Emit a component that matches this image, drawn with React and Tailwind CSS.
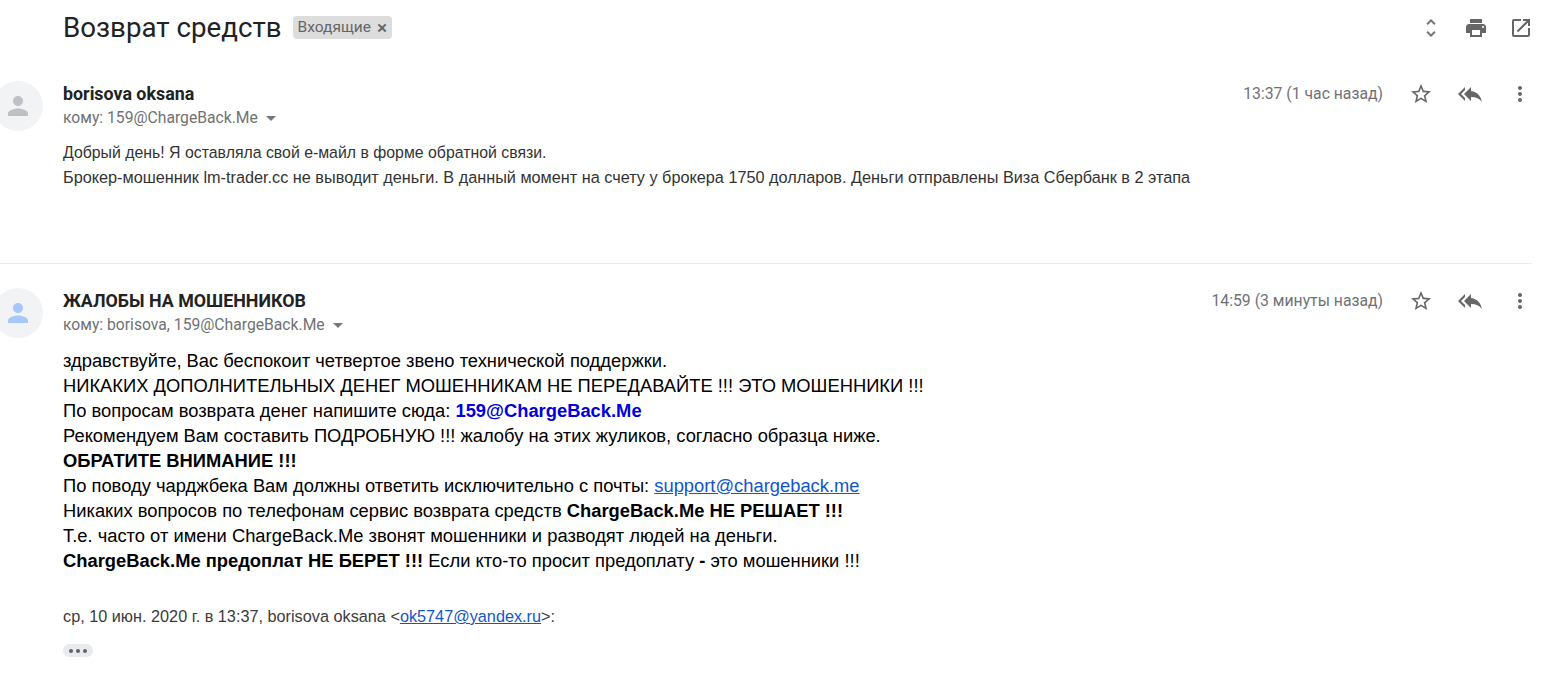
const ICONS = {
  unfold: "M12 5.83L15.17 9l1.41-1.41L12 3 7.41 7.59 8.83 9 12 5.83zm0 12.34L8.83 15l-1.41 1.41L12 21l4.59-4.59L15.17 15 12 18.17z",
  print: "M19 8H5c-1.66 0-3 1.34-3 3v6h4v4h12v-4h4v-6c0-1.66-1.34-3-3-3zm-3 11H8v-5h8v5zm3-7c-.55 0-1-.45-1-1s.45-1 1-1 1 .45 1 1-.45 1-1 1zm-1-9H6v4h12V3z",
  open: "M19 19H5V5h7V3H5c-1.11 0-2 .9-2 2v14c0 1.1.89 2 2 2h14c1.1 0 2-.9 2-2v-7h-2v7zM14 3v2h3.59l-9.83 9.83 1.41 1.41L19 6.41V10h2V3h-7z",
  star: "M22 9.24l-7.19-.62L12 2 9.19 8.63 2 9.24l5.46 4.73L5.82 21 12 17.27 18.18 21l-1.63-7.03L22 9.24zM12 15.4l-3.76 2.27 1-4.28-3.32-2.88 4.38-.38L12 6.1l1.71 4.04 4.38.38-3.32 2.88 1 4.28L12 15.4z",
  replyAll: "M7 8V5l-7 7 7 7v-3l-4-4 4-4zm6 1V5l-7 7 7 7v-4.1c5 0 8.5 1.6 11 5.1-1-5-4-10-11-11z",
  more: "M12 8c1.1 0 2-.9 2-2s-.9-2-2-2-2 .9-2 2 .9 2 2 2zm0 2c-1.1 0-2 .9-2 2s.9 2 2 2 2-.9 2-2-.9-2-2-2zm0 6c-1.1 0-2 .9-2 2s.9 2 2 2 2-.9 2-2-.9-2-2-2z",
  person: "M12 12c2.21 0 4-1.79 4-4s-1.79-4-4-4-4 1.79-4 4 1.79 4 4 4zm0 2c-2.67 0-8 1.34-8 4v2h16v-2c0-2.66-5.33-4-8-4z",
};

function Icon({ name, className = "w-6 h-6 text-[#666666]" }) {
  return (
    <svg viewBox="0 0 24 24" fill="currentColor" className={className}>
      <path d={ICONS[name]} />
    </svg>
  );
}

function MessageHeader({ sender, to, time, avatarColor }) {
  return (
    <div className="flex h-[50px] items-start">
      <div className="-ml-[7px] flex h-[50px] w-[50px] shrink-0 items-center justify-center rounded-full bg-[#f1f3f4]">
        <Icon name="person" className={`h-[30px] w-[30px] ${avatarColor}`} />
      </div>
      <div className="ml-[20px] flex-1 pt-[2px]">
        <div className="text-[17.85px] font-bold leading-[22px] text-[#222222]">{sender}</div>
        <div className="mt-[2px] flex items-center text-[15.7px] leading-[22px] text-[#6f7275]">
          <span>{to}</span>
          <span className="ml-[8px] mt-[1px] h-0 w-0 border-x-[5px] border-t-[5px] border-x-transparent border-t-[#777777]" />
        </div>
      </div>
      <div className="flex items-center pt-[1px]">
        <span className="text-[15.75px] leading-[22px] text-[#6f7275]">{time}</span>
        <Icon name="star" className="ml-[26px] h-6 w-6 text-[#666666]" />
        <Icon name="replyAll" className="ml-[25px] h-6 w-6 text-[#666666]" />
        <Icon name="more" className="ml-[26px] h-6 w-6 text-[#666666]" />
      </div>
    </div>
  );
}

export default function App() {
  return (
    <div className="h-[680px] w-[1547px] overflow-hidden bg-white pr-[15px] font-['Roboto',sans-serif]">
      <div className="flex h-[55px] items-center pl-[63px]">
        <h1 className="text-[27.7px] font-normal leading-[32px] text-[#222222]">Возврат средств</h1>
        <span className="ml-[11px] flex h-[23px] items-center rounded-[4px] bg-[#dddddd] px-[5px] text-[15.5px] text-[#666666]">
          Входящие
          <span className="ml-[6px] text-[19px] font-medium leading-none">×</span>
        </span>
        <div className="-mr-[1px] ml-auto flex items-center gap-[21px]">
          <Icon name="unfold" className="h-6 w-6 text-[#757575]" />
          <Icon name="print" className="h-6 w-6 text-[#666666]" />
          <Icon name="open" className="h-6 w-6 text-[#666666]" />
        </div>
      </div>

      <div className="h-[209px] border-b border-[#e8eaed] pt-[26px]">
        <MessageHeader
          sender="borisova oksana"
          to="кому: 159@ChargeBack.Me"
          time="13:37 (1 час назад)"
          avatarColor="text-[#bdc1c6]"
        />
        <div className="mt-[10px] pl-[63px] font-['Liberation_Sans',sans-serif] leading-[24px] text-[#333333]">
          <p className="text-[15.85px]">Добрый день! Я оставляла свой е-майл в форме обратной связи.</p>
          <p className="text-[16.25px]">Брокер-мошенник lm-trader.cc не выводит деньги. В данный момент на счету у брокера 1750 долларов. Деньги отправлены Виза Сбербанк в 2 этапа</p>
        </div>
      </div>

      <div className="pt-[24px]">
        <MessageHeader
          sender="ЖАЛОБЫ НА МОШЕННИКОВ"
          to="кому: borisova, 159@ChargeBack.Me"
          time="14:59 (3 минуты назад)"
          avatarColor="text-[#a8c7fa]"
        />
        <div className="mt-[10px] pl-[63px] font-['Liberation_Sans',sans-serif] text-[18.35px] leading-[25px] text-black">
          <p>здравствуйте, Вас беспокоит четвертое звено технической поддержки.</p>
          <p>НИКАКИХ ДОПОЛНИТЕЛЬНЫХ ДЕНЕГ МОШЕННИКАМ НЕ ПЕРЕДАВАЙТЕ !!! ЭТО МОШЕННИКИ !!!</p>
          <p>По вопросам возврата денег напишите сюда: <b className="text-[#0000dd]">159@ChargeBack.Me</b></p>
          <p>Рекомендуем Вам составить ПОДРОБНУЮ !!! жалобу на этих жуликов, согласно образца ниже.</p>
          <p><b>ОБРАТИТЕ ВНИМАНИЕ !!!</b></p>
          <p>По поводу чарджбека Вам должны ответить исключительно с почты: <a className="text-[#1155cc] underline">support@chargeback.me</a></p>
          <p>Никаких вопросов по телефонам сервис возврата средств <b>ChargeBack.Me НЕ РЕШАЕТ !!!</b></p>
          <p>Т.е. часто от имени ChargeBack.Me звонят мошенники и разводят людей на деньги.</p>
          <p><b>ChargeBack.Me предоплат НЕ БЕРЕТ !!!</b> Если кто-то просит предоплату <b>-</b> это мошенники !!!</p>
        </div>
        <p className="mt-[31px] pl-[63px] font-['Liberation_Sans',sans-serif] text-[16.26px] leading-[24px] text-[#3c3c3c]">
          ср, 10 июн. 2020 г. в 13:37, borisova oksana &lt;<a className="text-[#1155cc] underline">ok5747@yandex.ru</a>&gt;:
        </p>
        <div className="ml-[63px] mt-[16px] flex h-[13px] w-[30px] items-center justify-center gap-[3px] rounded-full bg-[#e8eaed]">
          <span className="h-[4px] w-[4px] rounded-full bg-[#5f6368]" />
          <span className="h-[4px] w-[4px] rounded-full bg-[#5f6368]" />
          <span className="h-[4px] w-[4px] rounded-full bg-[#5f6368]" />
        </div>
      </div>
    </div>
  );
}
